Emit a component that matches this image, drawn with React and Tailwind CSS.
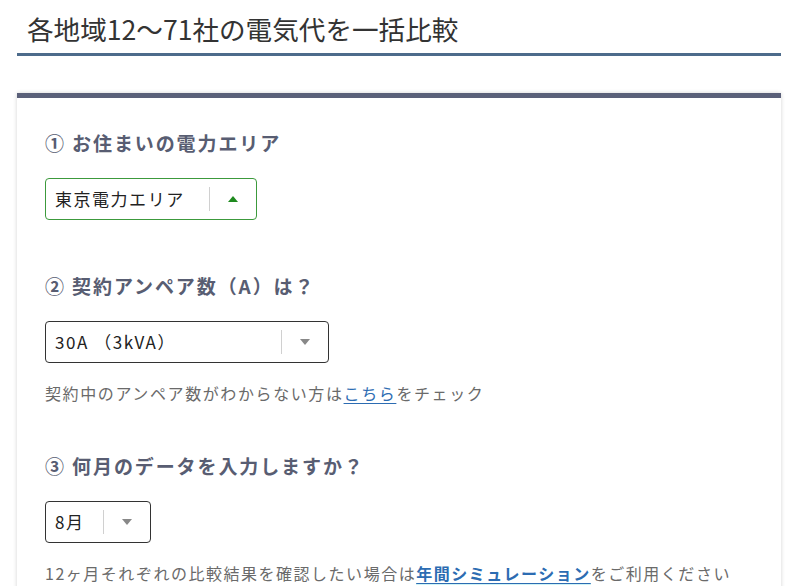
import React from "react";

const font = { fontFamily: '"Noto Sans CJK JP", "Noto Sans", sans-serif' };

function Arrow({ up, color }) {
  return (
    <svg width="10" height="6" viewBox="0 0 10 6">
      {up ? (
        <polygon points="0,6 10,6 5,0" fill={color} />
      ) : (
        <polygon points="0,0 10,0 5,6" fill={color} />
      )}
    </svg>
  );
}

function Select({ width, label, active }) {
  return (
    <div
      className={`mt-[22px] h-[42px] flex items-center rounded-[4px] border ${
        active ? "border-[#3c9a3c]" : "border-[#333]"
      } bg-white`}
      style={{ width }}
    >
      <div className="flex-1 pl-[9px] text-[17px] tracking-[0.09em] text-[#222] whitespace-nowrap">
        {label}
      </div>
      <div className="w-px h-[24px] bg-[#d0d0d0]" />
      <div className="w-[46px] flex justify-center items-center">
        <Arrow up={active} color={active ? "#1f8a1f" : "#888"} />
      </div>
    </div>
  );
}

function Heading({ children, className = "" }) {
  return (
    <div
      className={`text-[19px] font-bold leading-[26px] tracking-[0.1em] text-[#585d72] whitespace-nowrap ${className}`}
    >
      {children}
    </div>
  );
}

export default function App() {
  return (
    <div className="bg-white w-[800px] h-[586px] overflow-hidden pl-[17px] pr-[19px]" style={font}>
      <h1 className="pl-[10px] pt-[11px] pb-[6px] text-[26.6px] leading-[36px] text-[#333] border-b-[3px] border-[#4d6b8b] font-normal">
        各地域12～71社の電気代を一括比較
      </h1>
      <div className="mt-[37px] border-t-[5px] border-[#5a6079] bg-white shadow-[0_0_4px_rgba(0,0,0,0.18)] pl-[28px] pt-[32px] pb-[40px]">
        <Heading>① お住まいの電力エリア</Heading>
        <Select width={212} label="東京電力エリア" active />

        <Heading className="mt-[53px]">② 契約アンペア数（A）は？</Heading>
        <Select width={284} label="30A （3kVA）" />
        <div className="mt-[19px] text-[16px] leading-[22px] tracking-[0.1em] text-[#6a6a6a] whitespace-nowrap">
          契約中のアンペア数がわからない方は
          <span className="text-[#2c6cb2] underline underline-offset-[3px]">こちら</span>
          をチェック
        </div>

        <Heading className="mt-[49px]">③ 何月のデータを入力しますか？</Heading>
        <Select width={106} label="8月" />
        <div className="mt-[19px] text-[16px] leading-[22px] tracking-[0.095em] text-[#6a6a6a] whitespace-nowrap">
          12ヶ月それぞれの比較結果を確認したい場合は
          <span className="text-[#2c6cb2] font-bold underline underline-offset-[3px] bg-[linear-gradient(transparent_90%,#cff3f6_90%)]">
            年間シミュレーション
          </span>
          をご利用ください
        </div>
      </div>
    </div>
  );
}
